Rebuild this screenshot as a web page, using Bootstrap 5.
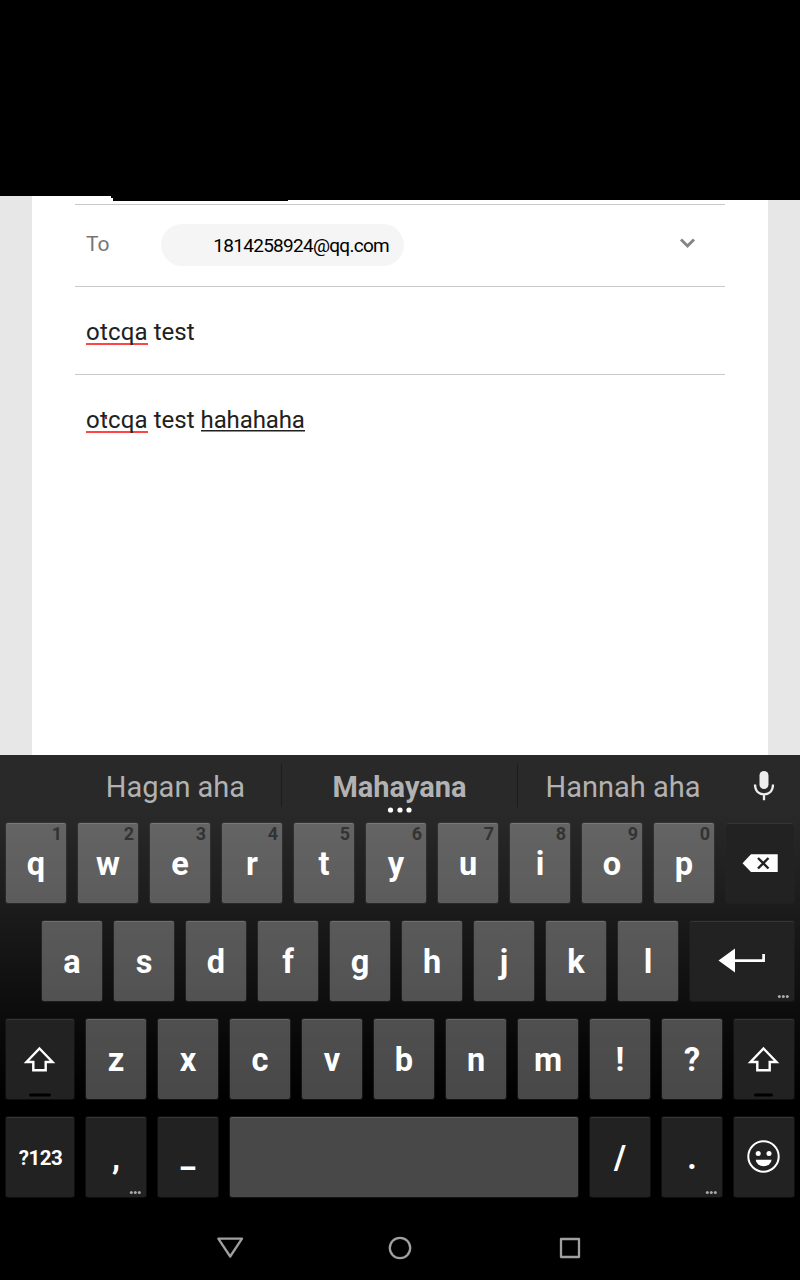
<!DOCTYPE html>
<html lang="en">
<head>
<meta charset="utf-8">
<meta name="viewport" content="width=device-width, initial-scale=1">
<title>Compose</title>
<link href="https://cdn.jsdelivr.net/npm/bootstrap@5.3.0/dist/css/bootstrap.min.css" rel="stylesheet">
<style>
body{font-family:Roboto,"Noto Sans",sans-serif;width:800px;height:1280px;overflow:hidden;background:#000}
svg{display:block}
.topbar{height:196px;background:#000}
.topbar svg{top:196px;left:0}
.compose{height:559px;background:#e7e7e7}
.sheet{width:736px;background:#fff;padding:8px 43px 0}
.field{border-top:1px solid #c9c9c9;padding-left:11px;color:#212121;font-size:24px;line-height:28px;white-space:pre}
.to-row{height:82px}
.to-label{font-size:21px;color:#757575;width:75px;margin-top:-3px}
.chip{width:243px;height:42px;background:#f5f5f5;padding:3px 15px 0 0;margin-top:-2px;font-size:19px;letter-spacing:-.72px;color:#000}
.chevron{margin:-4px 25px 0 auto}
.subject{height:88px;padding-top:31px}
.message{padding-top:31px}
.misspelt,.composing{display:inline-block;height:28px}
.misspelt{letter-spacing:.2px;background:linear-gradient(#ff4444,#ff4444) 0 25px/100% 2px no-repeat}
.touch{position:absolute;left:19px;top:11px;width:2px;height:2px;background:#f00}
.composing{letter-spacing:-.1px;background:linear-gradient(#212121 50%,#8c8c8c 50%) 0 24px/100% 2px no-repeat}
.keyboard{height:461px;background:linear-gradient(#292929 0,#292929 56px,#000 345px)}
.suggestions{height:56px;color:#b2b2b2;font-size:29px;line-height:64px}
.suggestions>div{text-align:center;white-space:nowrap}
.rule{width:1px;height:43px;background:#1c1c1c;margin-top:9px}
.more{left:50%;top:52px;transform:translateX(-50%)}
.keys{padding:12px 6px 0;gap:18px}
.key-row{gap:12px;height:80px}
.key{width:60px;height:80px;border-radius:2px;background:rgba(255,255,255,.284);box-shadow:inset 0 1px rgba(255,255,255,.13),0 0 0 1px rgba(90,90,90,.22);color:#fff;font-weight:700;font-size:32.500px;line-height:82px;text-align:center;position:relative;flex:none}
.key-dark{background:#222;box-shadow:inset 0 1px #353535,0 0 0 1px rgba(40,40,40,.35)}
.wide{width:68px}.enter{width:104px}.space{width:348px}
.hint{position:absolute;right:4px;top:1px;font-size:18px;line-height:20px;color:#333}
.sym{font-size:20.500px;line-height:83px;padding-left:1px;letter-spacing:-.5px}
.low{line-height:77px}
.dots{position:absolute;right:4px;bottom:2px}
.key>svg.face{width:100%;height:80px}
.navrow{height:64px;background:#000}
</style>
</head>
<body>
<header class="topbar position-relative">
  <svg class="position-absolute" width="800" height="5"><path d="M111 0H800V4H288V5H113V2H111Z"/></svg>
</header>
<main class="compose d-flex justify-content-center">
  <section class="sheet">
    <div class="field to-row d-flex align-items-center">
      <span class="to-label">To</span>
      <span class="chip rounded-pill d-flex align-items-center justify-content-end">1814258924@qq.com</span>
      <svg class="chevron" width="28" height="28"><path d="M9 9.500 15.500 16 22 9.500" fill="none" stroke="#858585" stroke-width="3"/></svg>
    </div>
    <div class="field subject"><span class="misspelt">otcqa</span> test</div>
    <div class="field message"><span class="misspelt position-relative">otcqa<i class="touch"></i></span> test <span class="composing">hahahaha</span></div>
  </section>
</main>
<section class="keyboard">
  <div class="suggestions d-flex">
    <div style="width:281px;padding-left:70px">Hagan aha</div><i class="rule"></i>
    <div class="fw-bold position-relative" style="width:235px">Mahayana<svg class="more position-absolute" width="26" height="6" fill="#fff"><circle cx="3.500" cy="3" r="2.600"/><circle cx="13" cy="3" r="2.600"/><circle cx="22" cy="3" r="2.600"/></svg></div><i class="rule"></i>
    <div style="width:210px">Hannah aha</div>
    <svg width="72" height="56"><rect x="31.500" y="16" width="9" height="18" rx="4.500" fill="#eee"/><path d="M27 29.500C27 36 31 39.300 36 39.300S45 36 45 29.500M36 39v6.300" fill="none" stroke="#eee" stroke-width="2.300"/></svg>
  </div>
  <div class="keys d-flex flex-column">
    <div class="key-row d-flex">
      <div class="key">q<span class="hint">1</span></div><div class="key">w<span class="hint">2</span></div><div class="key">e<span class="hint">3</span></div><div class="key">r<span class="hint">4</span></div><div class="key">t<span class="hint">5</span></div><div class="key">y<span class="hint">6</span></div><div class="key">u<span class="hint">7</span></div><div class="key">i<span class="hint">8</span></div><div class="key">o<span class="hint">9</span></div><div class="key">p<span class="hint">0</span></div>
      <div class="key key-dark wide"><svg class="face"><path d="M16.500 40.300 25 31.300H51.700V49H25Z" fill="#fff"/><path d="m32 35 10.500 10.500m0-10.500L32 45.500" stroke="#222" stroke-width="2.400"/></svg></div>
    </div>
    <div class="key-row d-flex justify-content-end">
      <div class="key">a</div><div class="key">s</div><div class="key">d</div><div class="key">f</div><div class="key">g</div><div class="key">h</div><div class="key">j</div><div class="key">k</div><div class="key">l</div>
      <div class="key key-dark enter"><svg class="face"><path d="M28.500 39.500 45 27.500v24Z" fill="#fff"/><path d="M44 39.700H73.600V33" fill="none" stroke="#fff" stroke-width="2.700"/></svg><svg class="dots" width="13" height="5" fill="#aaa"><circle cx="2.300" cy="2.500" r="1.500"/><circle cx="6.300" cy="2.500" r="1.500"/><circle cx="10.300" cy="2.500" r="1.500"/></svg></div>
    </div>
    <div class="key-row d-flex">
      <div class="key key-dark wide"><svg class="face"><path d="M33.500 29.500 46.500 43H39.700V51.200H27.300V43H20.500Z" fill="none" stroke="#fff" stroke-width="2.400"/><rect x="23" y="74.500" width="22" height="3" rx="1.500" fill="#000"/></svg></div>
      <div class="key">z</div><div class="key">x</div><div class="key">c</div><div class="key">v</div><div class="key">b</div><div class="key">n</div><div class="key">m</div><div class="key">!</div><div class="key">?</div>
      <div class="key key-dark"><svg class="face"><path d="M29.500 29.500 42.500 43H35.700V51.200H23.300V43H16.500Z" fill="none" stroke="#fff" stroke-width="2.400"/><rect x="20" y="74.500" width="19" height="3" rx="1.500" fill="#000"/></svg></div>
    </div>
    <div class="key-row d-flex">
      <div class="key key-dark wide sym">?123</div>
      <div class="key key-dark">,<svg class="dots" width="13" height="5" fill="#aaa"><circle cx="2.300" cy="2.500" r="1.500"/><circle cx="6.300" cy="2.500" r="1.500"/><circle cx="10.300" cy="2.500" r="1.500"/></svg></div>
      <div class="key key-dark low">_</div>
      <div class="key space"></div>
      <div class="key key-dark">/</div>
      <div class="key key-dark">.<svg class="dots" width="13" height="5" fill="#aaa"><circle cx="2.300" cy="2.500" r="1.500"/><circle cx="6.300" cy="2.500" r="1.500"/><circle cx="10.300" cy="2.500" r="1.500"/></svg></div>
      <div class="key key-dark"><svg class="face"><circle cx="29.500" cy="39.500" r="15.200" fill="none" stroke="#fff" stroke-width="2"/><g fill="#fff"><circle cx="24.200" cy="36.500" r="2.500"/><circle cx="35" cy="36.500" r="2.500"/><path d="M21.800 42.700H37.500a7.850 6.500 0 0 1-15.700 0Z"/></g></svg></div>
    </div>
  </div>
</section>
<nav class="navrow">
  <svg width="800" height="64" fill="none" stroke="#a0a0a0" stroke-width="2.300" stroke-linejoin="round"><path d="M218.300 22.700H242L230.200 40.500Z"/><circle cx="400" cy="32" r="10.200"/><rect x="561" y="23" width="18" height="18"/></svg>
</nav>
<script src="https://cdn.jsdelivr.net/npm/bootstrap@5.3.0/dist/js/bootstrap.bundle.min.js"></script>
</body>
</html>
